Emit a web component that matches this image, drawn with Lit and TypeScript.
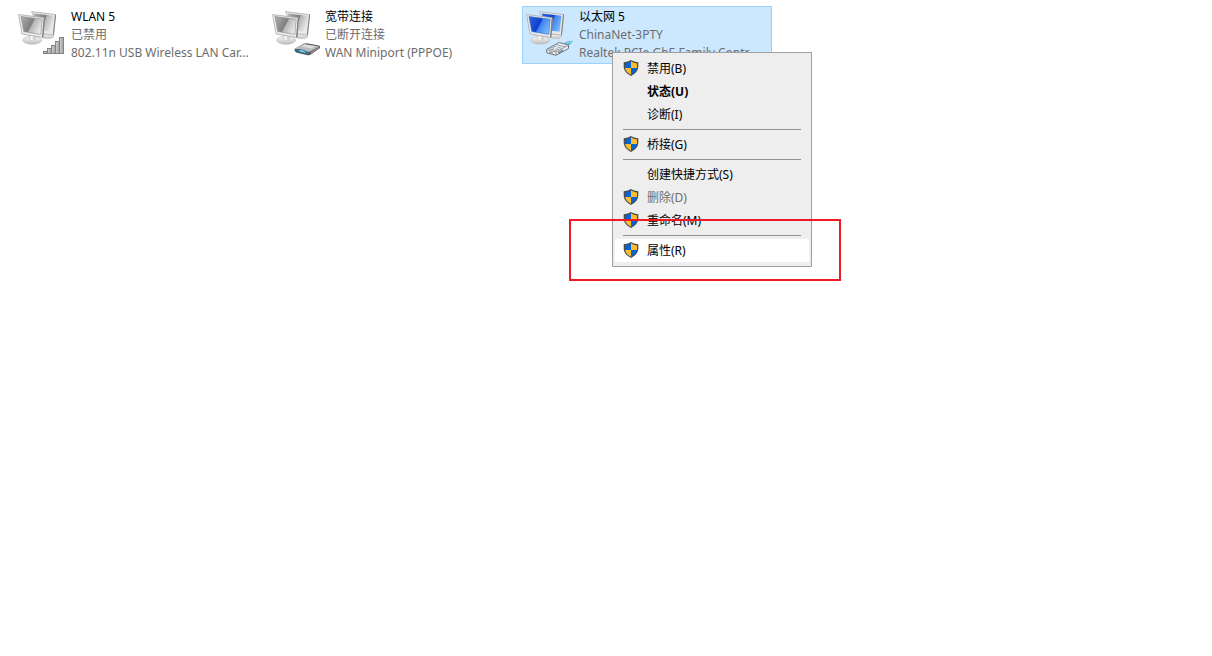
import { LitElement, html, css, svg, nothing } from "lit";
import { customElement, property } from "lit/decorators.js";
import { classMap } from "lit/directives/class-map.js";

type Kind = "wifi" | "modem" | "ethernet";

interface Connection {
  name: string;
  status: string;
  device: string;
  kind: Kind;
  selected?: boolean;
}

interface MenuItem {
  label: string;
  shield?: boolean;
  bold?: boolean;
  disabled?: boolean;
  active?: boolean;
}

const connections: Connection[] = [
  { name: "WLAN 5", status: "已禁用", device: "802.11n USB Wireless LAN Car...", kind: "wifi" },
  { name: "宽带连接", status: "已断开连接", device: "WAN Miniport (PPPOE)", kind: "modem" },
  { name: "以太网 5", status: "ChinaNet-3PTY", device: "Realtek PCIe GbE Family Contr...", kind: "ethernet", selected: true },
];

const menuGroups: MenuItem[][] = [
  [
    { label: "禁用(B)", shield: true },
    { label: "状态(U)", bold: true },
    { label: "诊断(I)" },
  ],
  [{ label: "桥接(G)", shield: true }],
  [
    { label: "创建快捷方式(S)" },
    { label: "删除(D)", shield: true, disabled: true },
    { label: "重命名(M)", shield: true },
  ],
  [{ label: "属性(R)", shield: true, active: true }],
];

@customElement("connection-icon")
class ConnectionIcon extends LitElement {
  @property() kind: Kind = "wifi";

  static styles = css`
    :host { display: block; flex: none; width: 50px; height: 50px; }
    svg { display: block; width: 100%; height: 100%; }
  `;

  private badge() {
    if (this.kind === "wifi") {
      return svg`<g fill="url(#bar)" stroke="#858585" stroke-width="1">
        <rect x="26.5" y="43.5" width="4" height="2"/>
        <rect x="30.5" y="40.5" width="4" height="5"/>
        <rect x="34.5" y="37.5" width="4" height="8"/>
        <rect x="38.5" y="33.5" width="4" height="12"/>
        <rect x="42.5" y="29.5" width="4" height="16"/>
      </g>`;
    }
    if (this.kind === "modem") {
      return svg`
        <path d="M23.5 41 L32.5 35.8 Q34 35 36 35.3 L48 37.6 Q49.5 38 49 40 L40 46.6 Q38.5 47.6 36.5 47.2 L25 44.4 Q23.4 43.6 23.5 41Z" fill="#5c5c5c"/>
        <path d="M24 40.6 L33 35.9 L48.5 38.4 L39.8 43.2 Q38 44 36 43.6Z" fill="#b9bbbc"/>
        <path d="M30 38.2 L34 36.4 L44.5 38.2 L40 40.4Z" fill="#dedede"/>
        <path d="M24.5 41.6 Q31 39.6 37.5 44.6 L37 46.4 L25.8 43.9Z" fill="#2f6f91"/>
        <path d="M28 42 Q32.5 41.4 35.500 44.8 L29.5 43.8Z" fill="#8fd0ee"/>
        <path d="M39.8 44 L48.6 39 L48.5 40.2 L39.8 46.2Z" fill="#8b8b8b"/>`;
    }
    return svg`
      <path d="M38 36.5 Q42 32.5 48 32.8 L46 35.5 Q43.5 36.5 41.5 39Z" fill="#45aed3"/>
      <path d="M41 35.6 L47 33.5" stroke="#b5e5f4" stroke-width="1"/>
      <path d="M21.5 41.5 L34 34.5 L43.5 37 L43.5 40.5 L31 47.3 L21.8 44.8Z" fill="#e7edf1" stroke="#707980" stroke-width="1"/>
      <path d="M22 41.8 L31 44 L43 37.4 M31 44 V47" fill="none" stroke="#7e878e" stroke-width=".8"/>
      <path d="M24 40.7 L32 42.8 M26.2 39.5 L34 41.5 M28.4 38.2 L36 40.2 M31.5 36.6 L40 39" stroke="#81898f" stroke-width=".8"/>
      <path d="M33 44 L38 41.2 V43 L33 45.7Z M24 43.5 L28 44.6 V45.5 L24 44.5Z" fill="#7a8288"/>
      <path d="M33.5 35.9 L36.5 36.7 M29 41 L33 38.9" stroke="#fff" stroke-width="1"/>`;
  }

  render() {
    const on = this.kind === "ethernet";
    return html`<svg viewBox="0 0 50 50" aria-hidden="true">
      <defs>
        <linearGradient id="screen" x1="0" y1=".2" x2="1" y2=".65">
          <stop offset="0" stop-color=${on ? "#2a62dc" : "#a9a9a9"}/>
          <stop offset=".5" stop-color=${on ? "#0a3fce" : "#7f7f7f"}/>
          <stop offset=".54" stop-color=${on ? "#3c82f0" : "#b4b4b4"}/>
          <stop offset="1" stop-color=${on ? "#7dbafc" : "#ececec"}/>
        </linearGradient>
        <linearGradient id="base" x1="0" y1="0" x2="0" y2="1">
          <stop offset="0" stop-color="#fafafa"/>
          <stop offset="1" stop-color="#bdbdbd"/>
        </linearGradient>
        <linearGradient id="bar" x1="0" y1="0" x2="1" y2="0">
          <stop offset="0" stop-color="#d2d2d2"/>
          <stop offset="1" stop-color="#9d9d9d"/>
        </linearGradient>
      </defs>
      <ellipse cx="30.5" cy="28.3" rx="6.5" ry="2.3" fill="url(#base)" stroke="#c6c6c6" stroke-width=".6"/>
      <path d="M14.6 3.6 L38.6 6.6 L36.4 27.2 L24 25.4Z" fill="#e8e8e8" stroke="#acacac" stroke-width=".8"/>
      <path d="M38.6 6.6 L36.4 27.2" stroke="#808080" stroke-width="1"/>
      <path d="M17 5.4 L36.4 7.8 L34.7 23.8 L20 22Z" fill="url(#screen)"/>
      <ellipse cx="15.2" cy="32.2" rx="9.4" ry="4" fill="url(#base)" stroke="#bcbcbc" stroke-width=".7"/>
      <path d="M11.500 26.5 L19.5 27.8 L18.8 32 Q15.5 33.8 12 31.6Z" fill="#d4d4d4"/>
      <path d="M13.4 27 L16 27.4 L15.6 32.5 L13.4 31.8Z" fill="#f6f6f6"/>
      <path d="M1.600 6.6 L27.4 9.8 L25.7 29.4 L5 25.9Z" fill="#eeeeee" stroke="#a8a8a8" stroke-width=".8"/>
      <path d="M27.4 9.8 L25.7 29.4" stroke="#787878" stroke-width="1.2"/>
      <path d="M4 8.5 L25.2 11.2 L23.8 26.4 L6.800 23.6Z" fill="url(#screen)" stroke=${on ? "#3469bf" : "#858585"} stroke-width=".6"/>
      ${this.badge()}
    </svg>`;
  }
}

@customElement("connection-tile")
class ConnectionTile extends LitElement {
  @property({ attribute: false }) item!: Connection;

  static styles = css`
    :host { display: block; min-width: 0; }
    .tile {
      box-sizing: border-box; display: flex; gap: 4px; width: 100%;
      padding: 1px 2px; border: 1px solid transparent; background: none;
      font: 12px/18px "Noto Sans", "Noto Sans CJK SC", sans-serif;
      text-align: left; color: #6d6d6d;
    }
    .selected { background: #cce8ff; border-color: #99d1ff; }
    .text { display: block; min-width: 0; }
    .line { display: block; white-space: nowrap; }
    .name { color: #000; }
  `;

  render() {
    const c = this.item;
    return html`<button class=${classMap({ tile: true, selected: !!c.selected })} aria-pressed=${c.selected ? "true" : "false"}>
      <connection-icon kind=${c.kind}></connection-icon>
      <span class="text">
        <span class="line name">${c.name}</span>
        <span class="line">${c.status}</span>
        <span class="line">${c.device}</span>
      </span>
    </button>`;
  }
}

@customElement("context-menu")
class ContextMenu extends LitElement {
  static styles = css`
    :host { display: block; }
    .menu {
      box-sizing: border-box; width: 200px; padding: 4px 2px;
      background: #eeeeee; border: 1px solid #a0a0a0;
    }
    .group + .group::before {
      content: ""; display: block; height: 1px; margin: 3px 8px; background: #919191;
    }
    .item {
      display: flex; gap: 8px; width: 100%; height: 23px;
      padding: 0 8px; border: 0; background: none; color: #000; text-align: left;
      font: 12px/23px "Noto Sans", "Noto Sans CJK SC", sans-serif;
      white-space: nowrap;
    }
    .bold { font-weight: 700; }
    .active { background: #fff; }
    .item:disabled { color: #6d6d6d; }
    .icon { flex: none; width: 16px; height: 16px; padding-top: 3px; }
    .icon svg { display: block; }
  `;

  private shield() {
    return html`<svg width="16" height="16" viewBox="0 0 16 16" aria-hidden="true">
      <path d="M8 0 Q10.5 2 15.300 2.2 V7 Q14.8 12.5 8 16 Q1.2 12.5 .700 7 V2.2 Q5.500 2 8 0Z" fill="#4c4c4c"/>
      <path d="M8 1.300 V8 H2 V3.400 Q5.500 3.100 8 1.300Z" fill="#0864cf"/>
      <path d="M8 1.300 Q10.500 3.100 14 3.400 V8 H8Z" fill="#fdbd30"/>
      <path d="M2.100 8 H8 V14.800 Q2.800 12 2.100 8Z" fill="#fdbd30"/>
      <path d="M8 8 H13.900 Q13.200 12 8 14.800Z" fill="#0864cf"/>
    </svg>`;
  }

  render() {
    return html`<div class="menu" role="menu">
      ${menuGroups.map((group) => html`<div class="group" role="group">
        ${group.map((m) => html`<button role="menuitem" ?disabled=${!!m.disabled}
          class=${classMap({ item: true, bold: !!m.bold, active: !!m.active })}>
          <span class="icon">${m.shield ? this.shield() : nothing}</span>
          <span>${m.label}</span>
        </button>`)}
      </div>`)}
    </div>`;
  }
}

@customElement("app-root")
class AppRoot extends LitElement {
  static styles = css`
    :host { display: block; position: relative; min-height: 100vh; background: #fff; }
    .grid {
      display: grid; grid-template-columns: repeat(auto-fill, 250px);
      gap: 4px; padding: 6px 14px;
    }
    .popup { position: absolute; left: 612px; top: 52px; }
    .marker {
      position: absolute; left: 569px; top: 219px; box-sizing: border-box;
      width: 272px; height: 62px; border: 2px solid #ed1c24; pointer-events: none;
    }
  `;

  render() {
    return html`
      <main class="grid">
        ${connections.map((c) => html`<connection-tile .item=${c}></connection-tile>`)}
      </main>
      <context-menu class="popup"></context-menu>
      <div class="marker"></div>
    `;
  }
}
